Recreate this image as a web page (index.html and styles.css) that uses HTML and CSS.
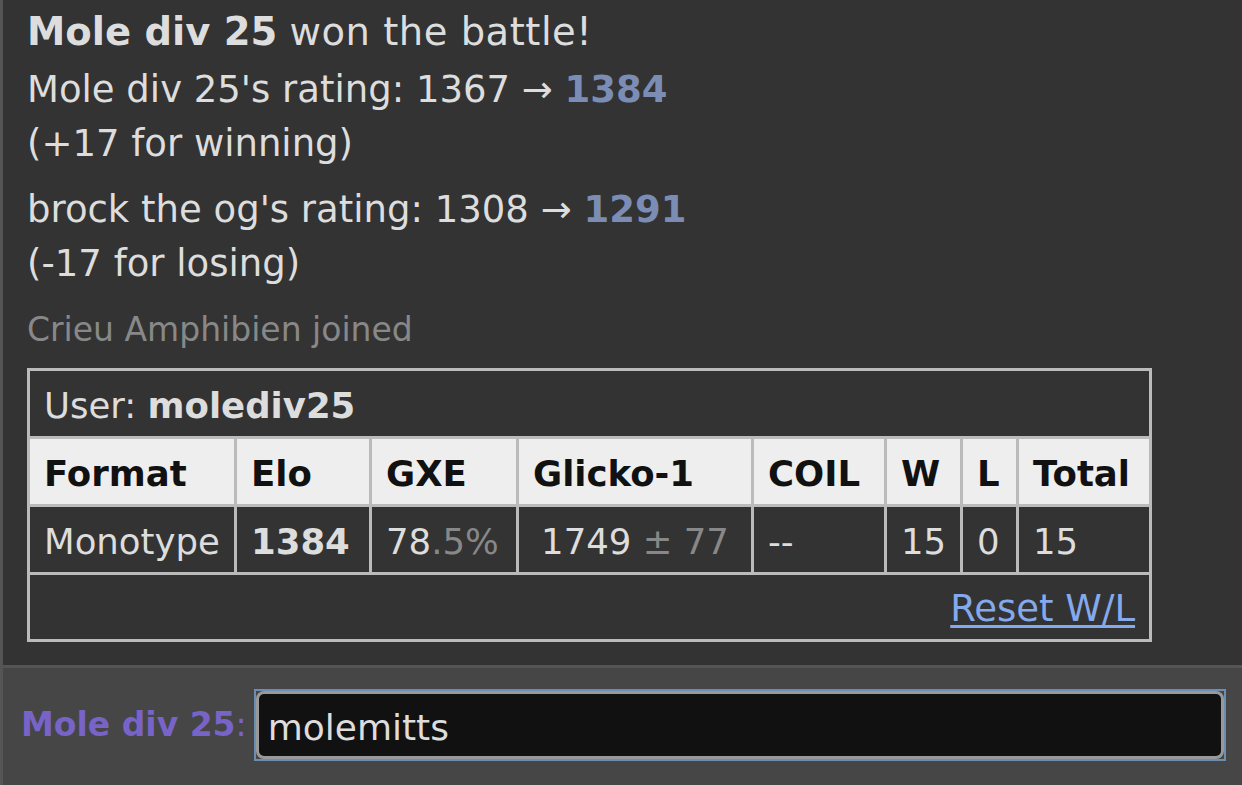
FILE: index.html
```html
<!DOCTYPE html>
<html>
<head>
<meta charset="utf-8">
<title>Battle log</title>
<link rel="stylesheet" href="styles.css">
</head>
<body>
<div class="frame">
  <div class="log">
    <div class="msg win"><strong>Mole div 25</strong> <span class="wintext">won the battle!</span></div>
    <div class="msg rating">Mole div 25's rating: 1367 → <strong class="newval">1384</strong><br>(+17 for winning)</div>
    <div class="msg rating">brock the og's rating: 1308 → <strong class="newval">1291</strong><br>(-17 for losing)</div>
    <div class="msg join">Crieu Amphibien joined</div>
    <table class="ladder">
      <colgroup>
        <col class="c-format">
        <col class="c-elo">
        <col class="c-gxe">
        <col class="c-glicko">
        <col class="c-coil">
        <col class="c-w">
        <col class="c-l">
        <col class="c-total">
      </colgroup>
      <tr><td colspan="8" class="user">User: <strong>molediv25</strong></td></tr>
      <tr>
        <th>Format</th><th>Elo</th><th>GXE</th><th>Glicko-1</th><th>COIL</th><th>W</th><th>L</th><th>Total</th>
      </tr>
      <tr>
        <td>Monotype</td>
        <td><strong>1384</strong></td>
        <td>78<span class="dim">.5%</span></td>
        <td class="center">1749<span class="dim"> ± 77</span></td>
        <td>--</td>
        <td>15</td>
        <td>0</td>
        <td>15</td>
      </tr>
      <tr><td colspan="8" class="reset"><a href="#">Reset W/L</a></td></tr>
    </table>
  </div>
  <div class="chatbar">
    <label class="who" for="chat"><strong>Mole div 25</strong>:</label>
    <div class="focus"><input id="chat" class="chatinput" type="text" value="molemitts"></div>
  </div>
</div>
</body>
</html>
```

FILE: styles.css
```css
html, body {
  margin: 0;
  padding: 0;
  background: #333;
}

body {
  font-family: "DejaVu Sans", Verdana, sans-serif;
  color: #ddd;
  overflow: hidden;
}

.frame {
  height: 785px;
  border-left: 3px solid #555;
  display: flex;
  flex-direction: column;
}

.log {
  height: 665px;
  box-sizing: border-box;
  padding: 5px 0 0 24px;
  font-size: 37px;
  line-height: 54px;
  overflow: hidden;
}

.msg strong {
  font-weight: bold;
}

.win {
  font-size: 38.5px;
  margin-bottom: 4px;
}

.wintext {
  letter-spacing: 0.5px;
}

.rating {
  margin-bottom: 12px;
}

.newval {
  color: #7b8db5;
}

.join {
  color: #888;
  font-size: 33px;
  margin-top: 2px;
  margin-bottom: 11px;
}

.ladder {
  width: 1125px;
  table-layout: fixed;
  border-collapse: separate;
  border-spacing: 3px;
  background: #bbb;
  font-size: 35.5px;
  line-height: 55px;
}

.c-format { width: 204px; }
.c-elo { width: 132px; }
.c-gxe { width: 144px; }
.c-glicko { width: 232px; }
.c-coil { width: 130px; }
.c-w { width: 73px; }
.c-l { width: 53px; }
.c-total { width: 130px; }

.ladder td,
.ladder th {
  box-sizing: border-box;
  padding: 7px 14px 3px 14px;
  text-align: left;
  white-space: nowrap;
  overflow: hidden;
}

.ladder td {
  background: #333;
  color: #ddd;
}

.ladder th {
  background: #eee;
  color: #111;
  font-weight: bold;
}

.ladder .center {
  text-align: center;
}

.dim {
  color: #888;
}

.ladder .reset {
  text-align: right;
  padding: 6px 14px 3px 14px;
  font-size: 37px;
}

.reset a {
  color: #84aaec;
  text-decoration: underline;
  text-underline-offset: 4px;
}

.chatbar {
  flex: 1;
  border-top: 3px solid #555;
  background: #464646;
  display: flex;
  align-items: center;
  padding: 0 16px 0 16px;
  gap: 7px;
}

.who {
  font-size: 33px;
  color: #7864c8;
  white-space: nowrap;
  margin-top: -4px;
  padding-left: 2px;
}

.focus {
  flex: 1;
  border: 2px solid #6b8fb3;
  background: #464646;
  height: 68px;
  margin-top: -3px;
}

.chatinput {
  display: block;
  width: 100%;
  height: 68px;
  box-sizing: border-box;
  border: 3px solid #999;
  border-radius: 8px;
  background: #111;
  color: #ddd;
  font-family: "DejaVu Sans", Verdana, sans-serif;
  font-size: 36px;
  padding: 4px 9px 0 9px;
  outline: none;
  margin: 0;
}
```
